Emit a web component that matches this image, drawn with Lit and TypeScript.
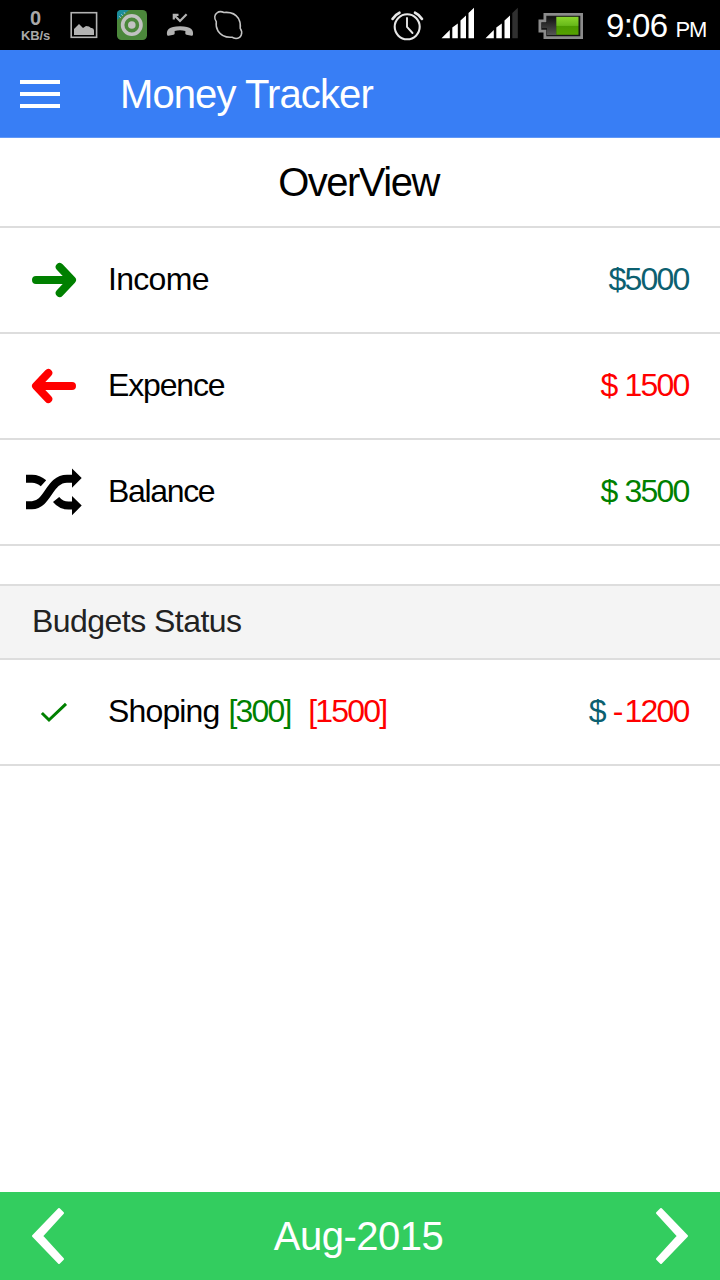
import { LitElement, html, svg, css } from "lit";
import { customElement } from "lit/decorators.js";

@customElement("status-bar")
class StatusBar extends LitElement {
  static styles = css`
    :host { display: flex; height: 50px; background: #000; color: #fff; }
    .net { flex: none; width: 71px; margin-right: -9px; padding-top: 9px; box-sizing: border-box; text-align: center; color: #a9a9a9; font-weight: bold; line-height: 19px; font-size: 20px; }
    .unit { font-size: 13px; line-height: 15px; letter-spacing: -0.1px; }
    svg { display: block; flex: none; }
    .time { font-size: 33px; line-height: 52px; letter-spacing: -0.7px; margin-left: 16px; white-space: nowrap; }
    .pm { font-size: 22px; letter-spacing: -1.2px; margin-left: 8px; }
  `;
  render() {
    return html`
      <div class="net"><div>0</div><div class="unit">KB/s</div></div>
      <svg width="528" height="50" viewBox="62 0 528 50">
        <defs>
          <linearGradient id="charge" x1="0" y1="0" x2="0" y2="1">
            <stop offset="0" stop-color="#8ad62c" /><stop offset=".48" stop-color="#68b91a" />
            <stop offset=".52" stop-color="#4b9a00" /><stop offset="1" stop-color="#55a100" />
          </linearGradient>
          <linearGradient id="empty" x1="0" y1="0" x2="0" y2="1">
            <stop offset="0" stop-color="#111" /><stop offset="1" stop-color="#555" />
          </linearGradient>
        </defs>
        <rect x="71.200" y="12.700" width="25.400" height="24.600" fill="none" stroke="#b2b2b2" stroke-width="1.600" />
        <path d="M74 35v-6l5-5 4 4 3-2 3 .5 2 1.500q3-.5 3 2.500V35z" fill="#b2b2b2" />
        <rect x="117" y="10" width="30" height="30" rx="4.500" fill="#4b873b" />
        <path d="M117 20v-6q0-4 4-4h8z" fill="#1a8d9c" />
        <path d="M119 16l2 2m0-4l2 2m1-4l1 2" stroke="#8fb9bb" stroke-width="1" />
        <circle cx="131.800" cy="25" r="9.200" fill="none" stroke="#c2c2c2" stroke-width="3.600" />
        <circle cx="131.800" cy="25" r="3.800" fill="#c2c2c2" />
        <path d="M167 34.500c-.6-4 1.500-8.200 13-8.200s13.600 4.200 13 8.200q-.2 1.500-1.500 1.200l-5-1q-1.300-.3-1.200-1.500l.1-2.200q-5.400-1.400-10.800 0l.1 2.200q.1 1.200-1.200 1.500l-5 1q-1.300.3-1.500-1.200z" fill="#b2b2b2" />
        <path d="M178.500 14.800h-4.700v4.700M174 15l6 6 6.600-6.800" fill="none" stroke="#b2b2b2" stroke-width="2.200" />
        <path d="M217 12.800Q220 10.600 224 12.500Q234 11.500 238.500 18.500Q241 23 240.200 28.300C243.500 33 241 38.500 236 38.500Q233.500 38.400 232 37.200Q222.500 38 218 31Q215.500 27 216.300 21.700C213.800 18.500 214.500 14.500 217 12.800z" fill="none" stroke="#c4c4c4" stroke-width="1.500" />
        <g fill="none" stroke="#e6e6e6" stroke-linecap="round">
          <circle cx="407.200" cy="26.800" r="12.500" stroke-width="2.100" />
          <path d="M407 18v9l5.500 6" stroke-width="1.900" />
          <path d="M392.500 19q2.500-4.300 7-6.300M422 19q-2.500-4.300-7-6.300" stroke-width="2.600" />
        </g>
        <g fill="#fff">
          <path d="M441.500 38.300l8.300-8.300v8.300zM452.300 27.500l5.500-4v14.800h-5.500zM460.500 20.500l5.500-5v22.800h-5.500zM468.500 13l5.500-5.300v30.600h-5.500z" />
          <path d="M485.500 38.300l8.300-8.300v8.300zM496.300 27.500l5.500-4v14.800h-5.500zM504.500 20.500l5.500-5v22.800h-5.500z" />
          <path d="M512.300 13l5.500-5.300v30.600h-5.500z" fill="#303030" />
        </g>
        <path d="M543.500 13h39.500v26h-39.500v-6.500h-5v-13h5z" fill="#8b8b8b" />
        <path d="M546.300 15.800h34v20.400h-34v-6.500h-5v-7.400h5z" fill="#161616" />
        <path d="M547 17h9.500v18H547v-7h-5v-5h5z" fill="url(#empty)" />
        <rect x="556.300" y="16.800" width="22.200" height="18" fill="url(#charge)" />
      </svg>
      <div class="time">9:06<span class="pm">PM</span></div>
    `;
  }
}

const icons = {
  income: svg`<path d="M36 52H71M59.700 38.900L72 52 59.700 65.100" fill="none" stroke="#008000" stroke-width="8" stroke-linecap="round" stroke-linejoin="round" />`,
  expense: svg`<path d="M72 52H37M48.300 38.900L36 52 48.300 65.100" fill="none" stroke="#f00" stroke-width="8" stroke-linecap="round" stroke-linejoin="round" />`,
  balance: svg`
    <path d="M26 65.200h6C48 65.200 49 38.700 67 38.700H73M26 38.700h6Q38.500 38.700 43.500 43.300M56.100 59.500Q61 65.500 68.500 65.500H73" fill="none" stroke="#000" stroke-width="8" />
    <path d="M72 28.500L81.700 38 72 47.700zM72 56L81.700 65.600 72 75.200z" />`,
  check: svg`<path d="M41.900 53L49 60 66 43.800" fill="none" stroke="#008000" stroke-width="3" />`,
};

@customElement("list-row")
class ListRow extends LitElement {
  static properties = { icon: {} };
  declare icon: keyof typeof icons;
  static styles = css`
    :host { display: flex; height: 104px; border-bottom: 2px solid #ddd; font-size: 32px; line-height: 102px; white-space: pre; }
    svg { display: block; flex: none; }
    .label { flex: 1; }
    .value { padding-right: 31.500px; }
  `;
  render() {
    return html`
      <svg width="108" height="104" viewBox="0 0 108 104">${icons[this.icon]}</svg>
      <div class="label"><slot></slot></div>
      <div class="value"><slot name="value"></slot></div>
    `;
  }
}

@customElement("app-root")
class AppRoot extends LitElement {
  static styles = css`
    :host { display: flex; flex-direction: column; height: 1280px; background: #fff; color: #000; overflow: hidden;
      font-family: "Liberation Sans", Arial, sans-serif; }
    svg { display: block; flex: none; }
    status-bar, list-row { flex: none; }
    .header { flex: none; display: flex; height: 87px; border-bottom: 1px solid #6198f7; background: #387ef5; color: #fff; font-size: 40px; line-height: 88px; letter-spacing: -0.9px; }
    .title { flex: none; height: 88px; padding-right: 3px; border-bottom: 2px solid #ddd; text-align: center; font-size: 40px; line-height: 89px; letter-spacing: -1.5px; }
    .divider { flex: none; height: 72px; margin-top: 38px; border-top: 2px solid #ddd; border-bottom: 2px solid #ddd; background: #f4f4f4; color: #222; padding-left: 32px; font-size: 32px; line-height: 71px; letter-spacing: -0.54px; }
    .income { letter-spacing: -0.7px; }
    .expense { letter-spacing: -1.15px; }
    .balance { letter-spacing: -1.34px; }
    .shop { letter-spacing: -0.85px; }
    .amount { letter-spacing: -1.8px; word-spacing: 0.9px; }
    .minus { letter-spacing: 1px; }
    .teal { color: #0c6070; }
    .red { color: #f00; }
    .green { color: #008000; }
    .budget { margin-left: 1px; }
    .spent { margin-left: 17.500px; }
    .footer { flex: none; display: flex; justify-content: space-between; height: 88px; margin-top: auto; background: #33cd5f; color: #fff; font-size: 40px; line-height: 89px; letter-spacing: -0.5px; }
    .month { padding-right: 3px; }
  `;
  render() {
    return html`
      <status-bar></status-bar>
      <div class="header">
        <svg width="120" height="87" viewBox="0 0 120 87"><path d="M20 30h40v4H20zM20 42h40v4H20zM20 54h40v4H20z" fill="#fff" /></svg>
        <div>Money Tracker</div>
      </div>
      <div class="title">OverView</div>
      <list-row icon="income"><span class="income">Income</span><span slot="value" class="amount teal">$5000</span></list-row>
      <list-row icon="expense"><span class="expense">Expence</span><span slot="value" class="amount red">$ 1500</span></list-row>
      <list-row icon="balance"><span class="balance">Balance</span><span slot="value" class="amount green">$ 3500</span></list-row>
      <div class="divider">Budgets Status</div>
      <list-row icon="check"><span class="shop">Shoping </span><span class="amount green budget">[300]</span><span class="amount red spent">[1500]</span><span slot="value" class="amount red"><span class="teal">$</span> <span class="minus">-</span>1200</span></list-row>
      <div class="footer">
        <svg width="96" height="88" viewBox="0 0 96 88"><path d="M59 17L33 44 59 71 63 67 42 44 63 21z" fill="#fff" stroke="#fff" stroke-width="2" stroke-linejoin="round" /></svg>
        <div class="month">Aug-2015</div>
        <svg width="96" height="88" viewBox="0 0 96 88"><path d="M37 17L63 44 37 71 33 67 54 44 33 21z" fill="#fff" stroke="#fff" stroke-width="2" stroke-linejoin="round" /></svg>
      </div>
    `;
  }
}
